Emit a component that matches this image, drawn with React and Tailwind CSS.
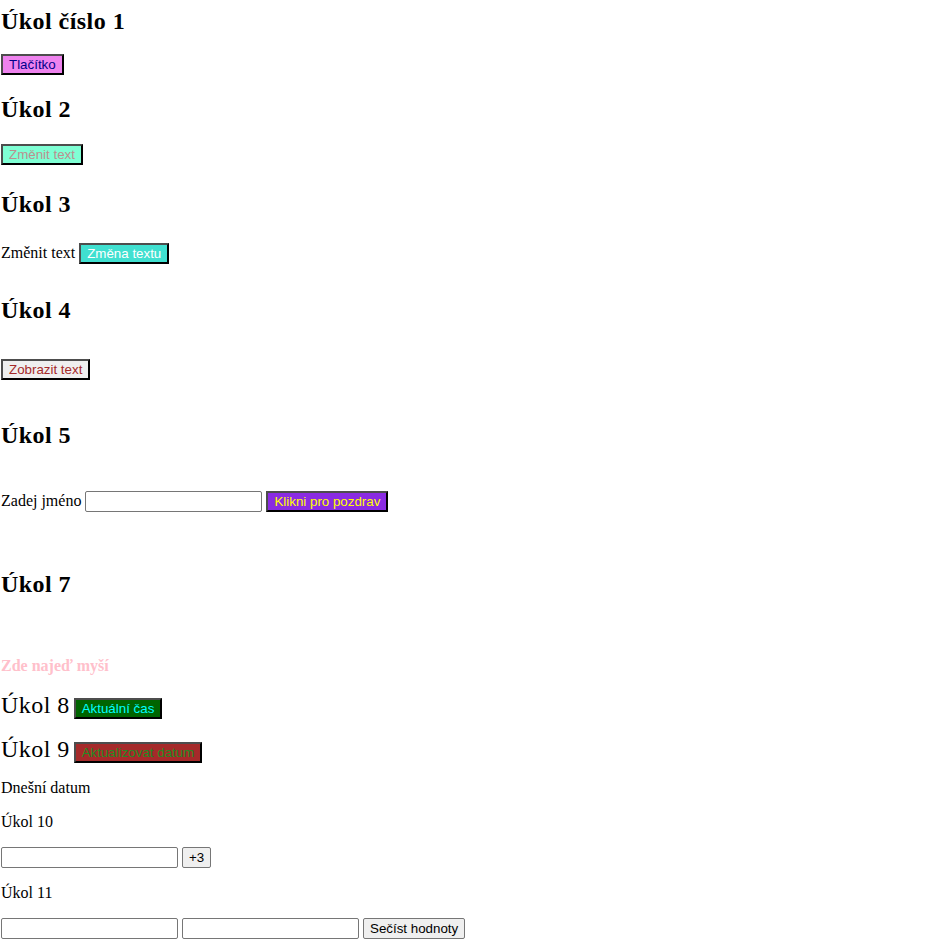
const serif = "font-['Liberation_Serif','Times_New_Roman',serif]";
const sans = "font-['Liberation_Sans',Arial,sans-serif]";

// buttons with a coloured background and the dark outset frame
function Btn({ bg, fg, children }) {
  return (
    <button
      type="button"
      className={`${sans} ${bg} ${fg} text-[13.33px] leading-[15px] px-[6px] py-px border-2 border-t-[#4d4d4d] border-l-[#4d4d4d] border-b-black border-r-black`}
    >
      {children}
    </button>
  );
}

// plain browser-looking button
function NativeBtn({ children }) {
  return (
    <button
      type="button"
      className={`${sans} text-[13.33px] leading-[15px] px-[6px] py-[2px] bg-[#efefef] text-black border border-[#767676] rounded-[2px]`}
    >
      {children}
    </button>
  );
}

function Field() {
  return (
    <input
      type="text"
      className={`${sans} w-[177px] h-[21px] text-[13.33px] leading-[15px] px-[2px] border border-[#767676] rounded-[2px] bg-white`}
    />
  );
}

function H2({ className = '', children }) {
  return <h2 className={`text-[24px] leading-[28px] tracking-[0.45px] font-bold ${className}`}>{children}</h2>;
}

export default function App() {
  return (
    <div className={`${serif} text-black bg-white min-h-[940px] pl-px text-[16px]`}>
      <H2 className="pt-[7px]">Úkol číslo 1</H2>
      <div className="mt-[19px] flex">
        <Btn bg="bg-[#ee82ee]" fg="text-[#00008b]">Tlačítko</Btn>
      </div>

      <H2 className="mt-[20px]">Úkol 2</H2>
      <div className="mt-[21px] flex">
        <Btn bg="bg-[#7fffd4]" fg="text-[#bc8f8f]">Změnit text</Btn>
      </div>

      <H2 className="mt-[25px]">Úkol 3</H2>
      <div className="mt-[25px] flex items-baseline gap-[4px]">
        <span className="leading-[18px]">Změnit text</span>
        <Btn bg="bg-[#40e0d0]" fg="text-white">Změna textu</Btn>
      </div>

      <H2 className="mt-[32px]">Úkol 4</H2>
      <div className="mt-[35px] flex">
        <Btn bg="bg-[#efefef]" fg="text-[#a52a2a]">Zobrazit text</Btn>
      </div>

      <H2 className="mt-[41px]">Úkol 5</H2>
      <div className="mt-[42px] flex items-baseline gap-[4px]">
        <span className="leading-[18px]">Zadej jméno</span>
        <Field />
        <Btn bg="bg-[#8a2be2]" fg="text-[#ffff00]">Klikni pro pozdrav</Btn>
      </div>

      <H2 className="mt-[58px]">Úkol 7</H2>
      <p className="mt-[59px] leading-[18px] font-bold text-[#ffc0cb]">Zde najeď myší</p>

      <div className="mt-[16px] flex items-baseline gap-[4px]">
        <span className="text-[24px] leading-[28px] tracking-[0.45px]">Úkol 8</span>
        <Btn bg="bg-[#006400]" fg="text-[#00ffff]">Aktuální čas</Btn>
      </div>
      <div className="mt-[16px] flex items-baseline gap-[4px]">
        <span className="text-[24px] leading-[28px] tracking-[0.45px]">Úkol 9</span>
        <Btn bg="bg-[#a52a2a]" fg="text-[#228b22]">Aktualizovat datum</Btn>
      </div>

      <p className="mt-[16px] leading-[18px]">Dnešní datum</p>
      <p className="mt-[16px] leading-[18px]">Úkol 10</p>
      <div className="mt-[16px] flex items-baseline gap-[4px]">
        <Field />
        <NativeBtn>+3</NativeBtn>
      </div>
      <p className="mt-[16px] leading-[18px]">Úkol 11</p>
      <div className="mt-[16px] flex items-baseline gap-[4px]">
        <Field />
        <Field />
        <NativeBtn>Sečíst hodnoty</NativeBtn>
      </div>
    </div>
  );
}
